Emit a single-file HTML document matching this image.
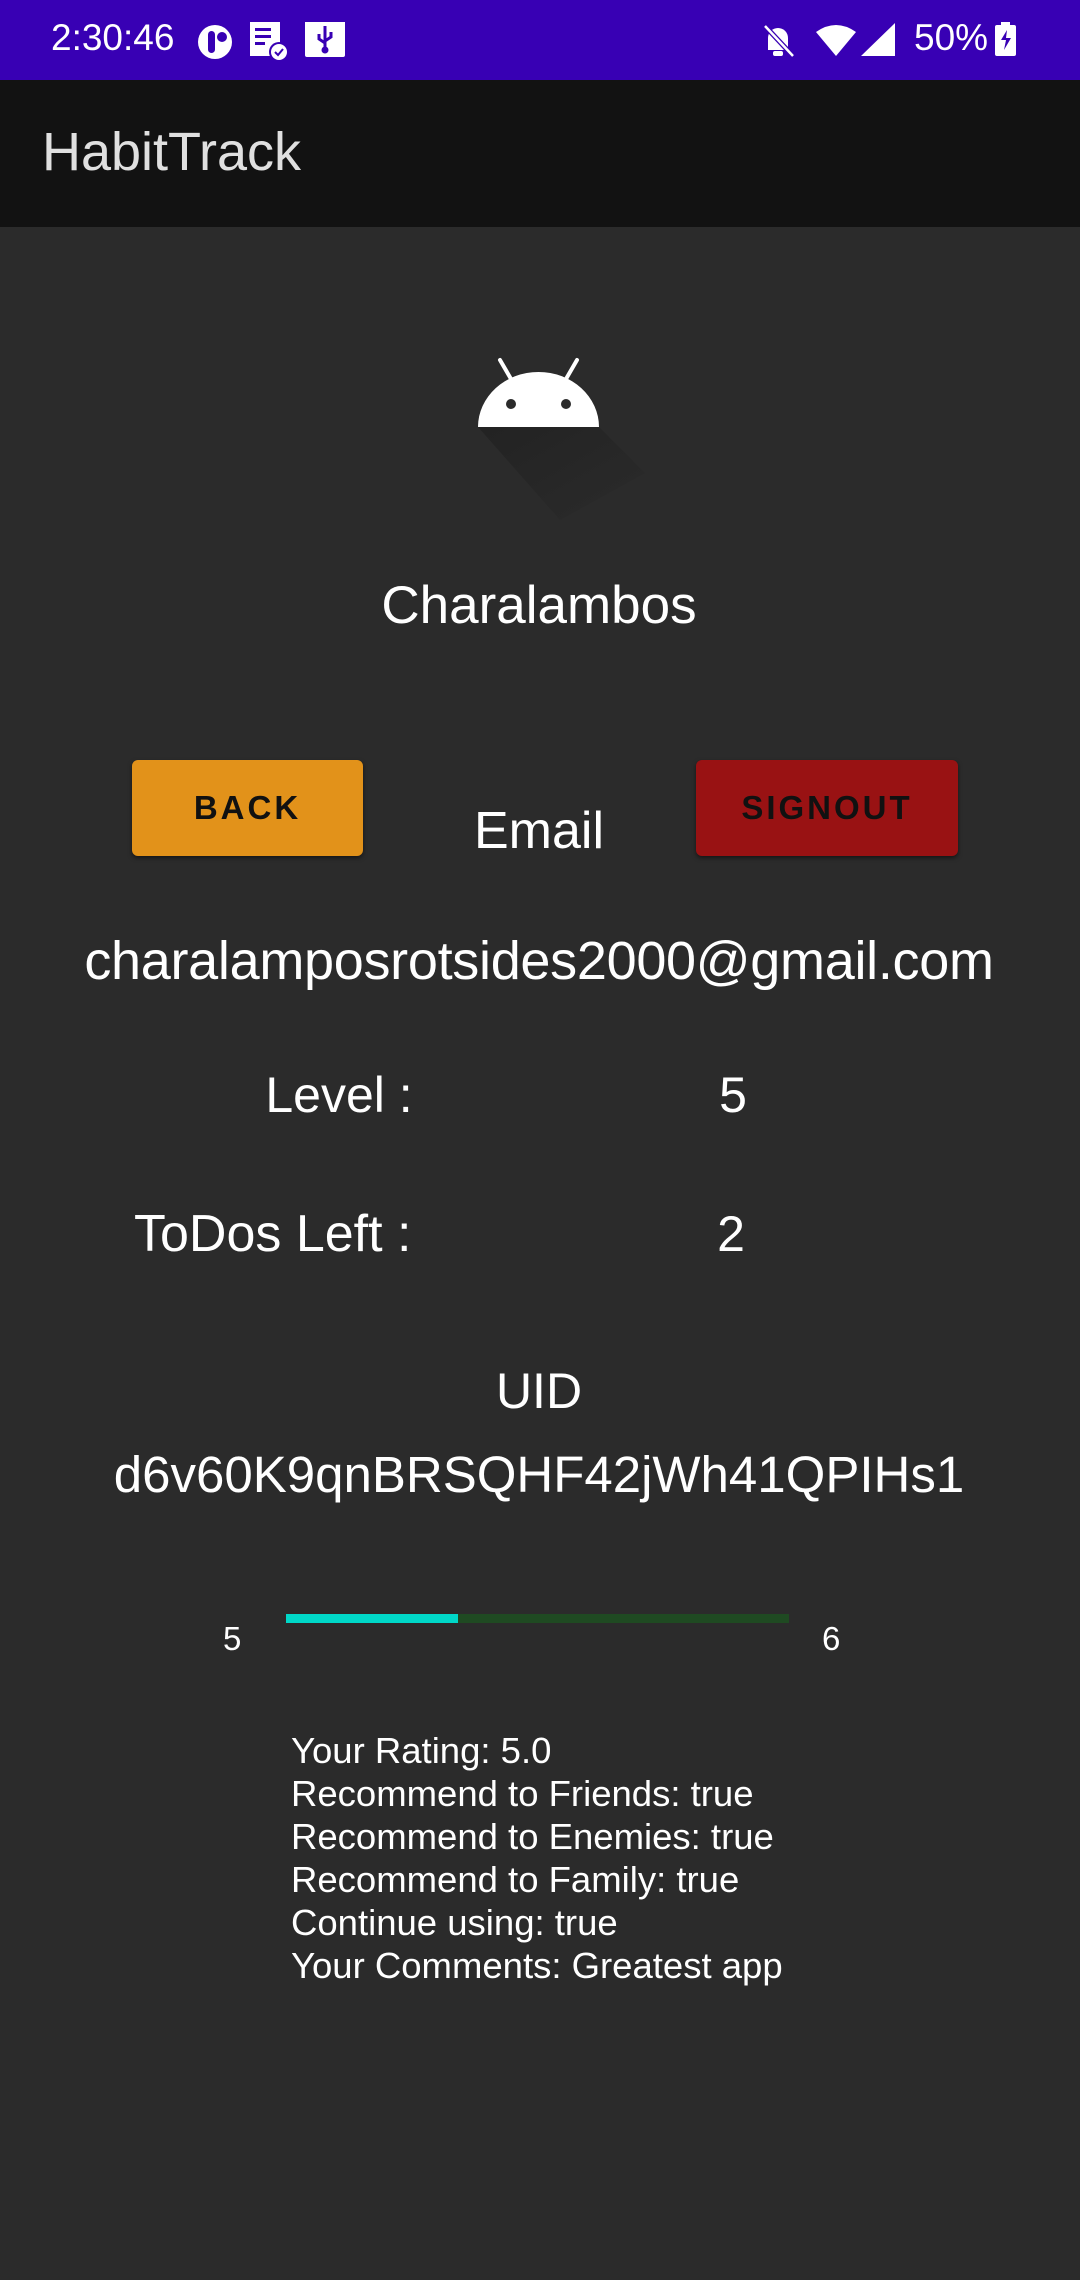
<!DOCTYPE html>
<html><head><meta charset="utf-8">
<style>
*{margin:0;padding:0;box-sizing:border-box}
body{width:1080px;height:2280px;background:#2b2b2b;font-family:"Liberation Sans",sans-serif;color:#fff;position:relative;overflow:hidden}
.a{position:absolute;white-space:nowrap}
.c{position:absolute;width:1000px;text-align:center;white-space:nowrap}
</style></head><body>
<div class="a" style="left:0;top:0;width:1080px;height:80px;background:#3800b4"></div>
<div class="a" style="left:51px;top:16px;font-size:37px;line-height:44px;color:#fff">2:30:46</div>
<svg class="a" style="left:195px;top:22px" width="160" height="40" viewBox="0 0 160 40">
 <circle cx="20" cy="20" r="17" fill="#fff"/><rect x="13" y="9" width="7" height="22" rx="3.5" fill="#3800b4"/><circle cx="27" cy="15" r="5" fill="#3800b4"/>
 <rect x="55" y="-2" width="30" height="36" fill="#fff"/><rect x="60" y="6" width="16" height="3" fill="#3800b4"/><rect x="60" y="13" width="16" height="3" fill="#3800b4"/><rect x="60" y="20" width="10" height="3" fill="#3800b4"/>
 <circle cx="84" cy="30" r="10" fill="#3800b4"/><circle cx="84" cy="30" r="8" fill="#fff"/><path d="M80 30 l3 3 l5 -6" stroke="#3800b4" stroke-width="2" fill="none"/>
 <rect x="110" y="-2" width="40" height="37" rx="2" fill="#fff"/><path d="M130 4 v22 M124 12 v5 l6 4 M136 10 v5 l-6 4" stroke="#3800b4" stroke-width="3" fill="none"/><circle cx="130" cy="28" r="3.5" fill="#3800b4"/>
</svg>
<svg class="a" style="left:760px;top:20px" width="260" height="40" viewBox="0 0 260 40">
 <path d="M8 30 V18 a10 10 0 0 1 20 0 V30 z" fill="#fff"/><rect x="13" y="31" width="10" height="5" rx="2" fill="#fff"/><path d="M5 6 L33 36" stroke="#3800b4" stroke-width="5"/><path d="M5 6 L33 36" stroke="#fff" stroke-width="2.5"/>
 <path d="M56 12 Q76 -2 96 12 L76 36 Z" fill="#fff"/>
 <path d="M135 3 V36 H101 Z" fill="#fff"/>
 <rect x="235" y="5" width="21" height="31" rx="2" fill="#fff"/><rect x="241" y="2" width="9" height="4" fill="#fff"/><path d="M247 10 l-6 10 h5 l-2 10 l7 -12 h-5 z" fill="#3800b4"/>
</svg>
<div class="a" style="left:914px;top:16px;font-size:37px;line-height:44px">50%</div>
<div class="a" style="left:0;top:80px;width:1080px;height:147px;background:#121212"></div>
<div class="a" style="left:42px;top:120px;font-size:54px;line-height:64px;color:#e0e0e0">HabitTrack</div>
<svg class="a" style="left:470px;top:350px" width="200" height="190" viewBox="470 350 200 190">
 <defs><linearGradient id="g" x1="0" y1="0" x2="1" y2="1"><stop offset="0" stop-color="#1f1f1f"/><stop offset="1" stop-color="#2b2b2b"/></linearGradient></defs>
 <path d="M478 427 H599 L645 473 L560 520 Z" fill="url(#g)" opacity="0.7"/>
 <path d="M478 427 A60.5 55 0 0 1 599 427 Z" fill="#fff"/>
 <path d="M500 360 L511 379 M577 360 L566 379" stroke="#fff" stroke-width="4" stroke-linecap="round"/>
 <circle cx="511" cy="404" r="5" fill="#2b2b2b"/><circle cx="566" cy="404" r="5" fill="#2b2b2b"/>
</svg>
<div class="c" style="left:39px;top:574px;font-size:53px;line-height:64px">Charalambos</div>
<div class="a" style="left:132px;top:760px;width:231px;height:96px;background:#e2921a;border-radius:6px;box-shadow:0 2px 4px rgba(0,0,0,.5);color:#111;font-size:33px;font-weight:bold;letter-spacing:3px;text-align:center;line-height:96px">BACK</div>
<div class="a" style="left:696px;top:760px;width:262px;height:96px;background:#991213;border-radius:6px;box-shadow:0 2px 4px rgba(0,0,0,.5);color:#111;font-size:33px;font-weight:bold;letter-spacing:3px;text-align:center;line-height:96px">SIGNOUT</div>
<div class="c" style="left:39px;top:799px;font-size:52px;line-height:64px">Email</div>
<div class="c" style="left:39px;top:929px;font-size:54px;line-height:64px;letter-spacing:-0.3px">charalamposrotsides2000@gmail.com</div>
<div class="c" style="left:-161px;top:1063px;font-size:50px;line-height:64px">Level :</div>
<div class="c" style="left:233px;top:1063px;font-size:50px;line-height:64px">5</div>
<div class="a" style="left:134px;top:1202px;font-size:52px;line-height:64px">ToDos Left :</div>
<div class="c" style="left:231px;top:1202px;font-size:50px;line-height:64px">2</div>
<div class="c" style="left:39px;top:1359px;font-size:50px;line-height:64px">UID</div>
<div class="c" style="left:39px;top:1443px;font-size:51px;line-height:64px">d6v60K9qnBRSQHF42jWh41QPIHs1</div>
<div class="a" style="left:286px;top:1614px;width:503px;height:9px;background:#1f4a22"></div>
<div class="a" style="left:286px;top:1614px;width:172px;height:9px;background:#00d8c8"></div>
<div class="a" style="left:223px;top:1619px;font-size:33px;line-height:40px">5</div>
<div class="a" style="left:822px;top:1619px;font-size:33px;line-height:40px">6</div>
<div class="a" style="left:291px;top:1729px;font-size:36.5px;line-height:43px;white-space:pre">Your Rating: 5.0
Recommend to Friends: true
Recommend to Enemies: true
Recommend to Family: true
Continue using: true
Your Comments: Greatest app</div>
</body></html>
